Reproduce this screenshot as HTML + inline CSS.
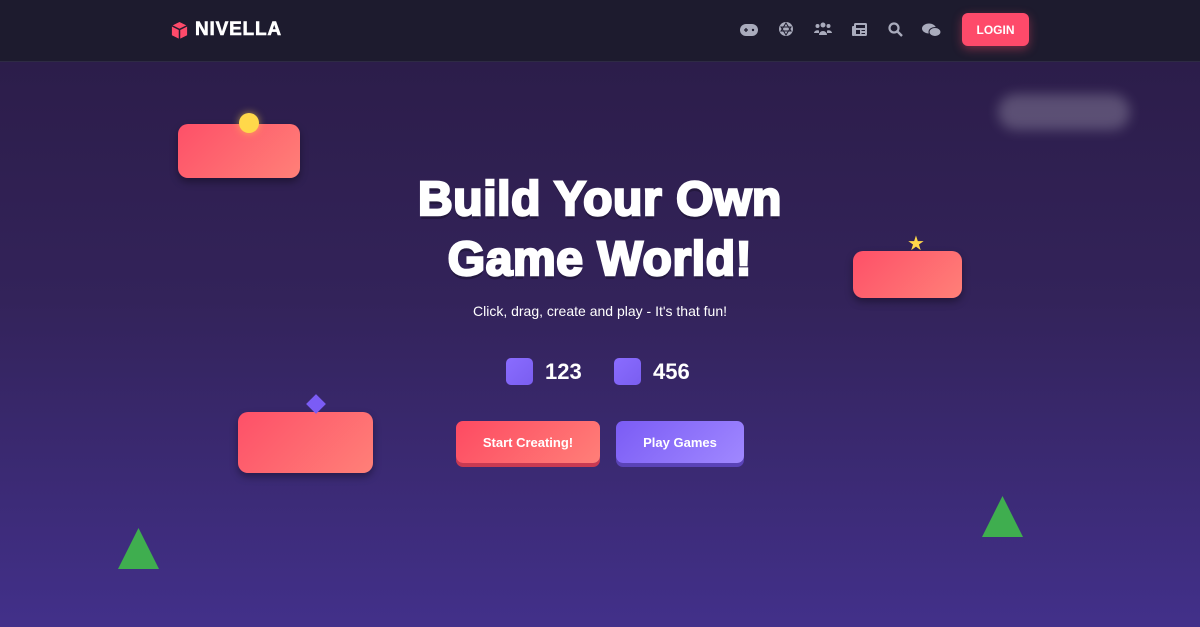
<!DOCTYPE html>
<html><head><meta charset="utf-8"><style>
*{margin:0;padding:0;box-sizing:border-box}
body{width:1200px;height:627px;overflow:hidden;font-family:"Liberation Sans",sans-serif;background:linear-gradient(180deg,#2c1d4a 62px,#33235a 300px,#42308a 627px);position:relative}
nav{position:absolute;top:0;left:0;width:1200px;height:62px;background:#1d1b2e;border-bottom:1px solid #2e2a44}
.logo{position:absolute;left:170px;top:19px;display:flex;align-items:center;gap:6px;color:#fff;font-weight:900;font-size:19px;letter-spacing:.8px;-webkit-text-stroke:.6px #fff}
.ic{position:absolute;top:21px}
.login{position:absolute;left:962px;top:13px;width:67px;height:33px;background:#fe4a6a;border-radius:6px;color:#fff;font-weight:bold;font-size:12px;display:flex;align-items:center;justify-content:center;box-shadow:0 3px 10px rgba(254,74,106,.4)}
.plat{position:absolute;border-radius:10px;background:linear-gradient(135deg,#fe5068,#ff8078);box-shadow:0 4px 8px rgba(0,0,0,.35)}
h1{position:absolute;left:0;width:1200px;top:170px;text-align:center;color:#fff;font-size:48px;line-height:60px;font-weight:900;letter-spacing:0.6px;-webkit-text-stroke:2.5px #fff;text-shadow:0 4px 0 rgba(0,0,0,.25)}
.sub{position:absolute;top:303px;width:1200px;text-align:center;color:#fff;font-size:14px}
.stat{position:absolute;top:358px;display:flex;align-items:center;gap:12px;color:#fff;font-weight:bold;font-size:22px}
.sq{width:27px;height:27px;border-radius:5px;background:linear-gradient(135deg,#8a6cff,#7a5ef0)}
.btn{position:absolute;top:421px;height:42px;border-radius:7px;color:#fff;font-weight:bold;font-size:13px;display:flex;align-items:center;justify-content:center}
</style></head><body>
<nav>
<div class="logo"><svg width="19" height="19" viewBox="0 0 20 20"><path d="M10 1L18 5V15L10 19L2 15V5Z" fill="#fe4a6a"/><path d="M2 5L10 9L18 5M10 9V19" stroke="#1d1b2e" stroke-width="1.6" fill="none"/></svg>NIVELLA</div>
<svg class="ic" style="left:740px;top:24px" width="18" height="12" viewBox="0 0 18 12"><rect x="0" y="0" width="18" height="12" rx="6" fill="#a9abbc"/><path d="M4 6h4M6 4v4" stroke="#1d1b2e" stroke-width="1.3"/><circle cx="13" cy="6" r="1.2" fill="#1d1b2e"/></svg>
<svg class="ic" style="left:778px" width="16" height="16" viewBox="0 0 16 16"><circle cx="8" cy="8" r="7" fill="#a9abbc"/><path d="M8 2L13 10H3ZM8 14L3 6H13Z" stroke="#1d1b2e" stroke-width="1" fill="none"/></svg>
<svg class="ic" style="left:814px" width="18" height="15" viewBox="0 0 18 15"><circle cx="9" cy="4" r="2.5" fill="#a9abbc"/><circle cx="3.5" cy="5" r="2" fill="#a9abbc"/><circle cx="14.5" cy="5" r="2" fill="#a9abbc"/><path d="M5 14a4 4 0 0 1 8 0ZM0 12a3.5 3 0 0 1 5-2.5V12ZM18 12a3.5 3 0 0 0-5-2.5V12Z" fill="#a9abbc"/></svg>
<svg class="ic" style="left:852px;top:23px" width="15" height="13" viewBox="0 0 15 13"><rect x="2" y="0" width="13" height="13" rx="1.5" fill="#a9abbc"/><rect x="0" y="3" width="3" height="10" rx="1" fill="#a9abbc"/><rect x="4" y="2" width="9" height="3" fill="#1d1b2e"/><rect x="4" y="7" width="4" height="4" fill="#1d1b2e"/><path d="M9.5 7.5h3.5M9.5 10.5h3.5" stroke="#1d1b2e"/></svg>
<svg class="ic" style="left:888px;top:22px" width="15" height="15" viewBox="0 0 15 15"><circle cx="6" cy="6" r="4.5" stroke="#a9abbc" stroke-width="2.2" fill="none"/><path d="M9.5 9.5L14 14" stroke="#a9abbc" stroke-width="2.4"/></svg>
<svg class="ic" style="left:922px;top:23px" width="19" height="15" viewBox="0 0 19 15"><ellipse cx="7" cy="5.5" rx="7" ry="5" fill="#a9abbc"/><ellipse cx="13" cy="9" rx="6" ry="4.5" fill="#a9abbc" stroke="#1d1b2e" stroke-width="1"/></svg>
<div class="login">LOGIN</div>
</nav>
<div style="position:absolute;left:998px;top:94px;width:132px;height:36px;border-radius:18px;background:rgba(255,255,255,.22);filter:blur(6px)"></div>
<div class="plat" style="left:178px;top:124px;width:122px;height:54px"></div>
<div style="position:absolute;left:239px;top:113px;width:20px;height:20px;border-radius:50%;background:#ffd84a;box-shadow:0 0 8px rgba(255,216,74,.6)"></div>
<div class="plat" style="left:853px;top:251px;width:109px;height:47px"></div>
<div style="position:absolute;left:907px;top:231px;color:#ffd84a;font-size:20px">★</div>
<div class="plat" style="left:238px;top:412px;width:135px;height:61px"></div>
<div style="position:absolute;left:309px;top:397px;width:14px;height:14px;background:#7b5cf5;transform:rotate(45deg)"></div>
<svg style="position:absolute;left:118px;top:528px" width="41" height="41"><path d="M20.5 0L41 41H0Z" fill="#3fae4f"/></svg>
<svg style="position:absolute;left:982px;top:496px" width="41" height="41"><path d="M20.5 0L41 41H0Z" fill="#3fae4f"/></svg>
<h1>Build Your Own<br>Game World!</h1>
<div class="sub">Click, drag, create and play - It's that fun!</div>
<div class="stat" style="left:506px"><div class="sq"></div>123</div>
<div class="stat" style="left:614px"><div class="sq"></div>456</div>
<div class="btn" style="left:456px;width:144px;background:linear-gradient(135deg,#fe4a62,#ff7f78);box-shadow:0 4px 0 #c93a52">Start Creating!</div>
<div class="btn" style="left:616px;width:128px;background:linear-gradient(135deg,#7b5cf5,#a088ff);box-shadow:0 4px 0 #5a43b8">Play Games</div>
</body></html>
